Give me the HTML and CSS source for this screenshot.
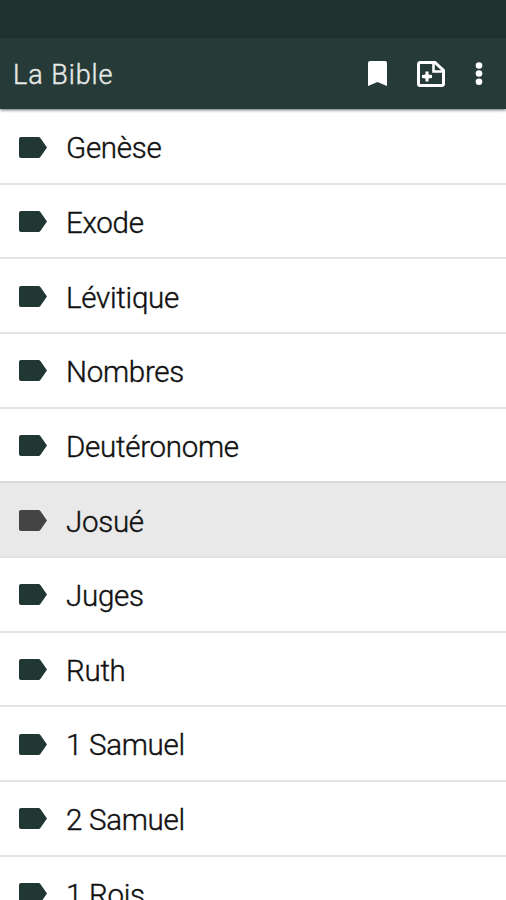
FILE: index.html
```html
<!DOCTYPE html>
<html lang="fr">
<head>
<meta charset="utf-8">
<title>La Bible</title>
<link rel="stylesheet" href="styles.css">
</head>
<body>
<svg class="defs" width="0" height="0"><symbol id="label" viewBox="3 5 19 14" preserveAspectRatio="none"><path d="M17.63 5.84C17.27 5.33 16.67 5 16 5L4.500 5C3.500 5 3 5.600 3 6.500v11c0 .9.500 1.500 1.500 1.500L16 19c.67 0 1.27-.33 1.63-.84L22 12l-4.37-6.16z"/></symbol></svg>
<div class="status"></div>
<header class="bar">
<h1>La Bible</h1>
<svg class="bookmark" viewBox="0 0 19 25"><path d="M2 0h15a2 2 0 0 1 2 2v23l-9.500-4L0 25V2a2 2 0 0 1 2-2z"/></svg>
<svg class="note" viewBox="0 0 28 26"><path class="outline" d="M3 1.500h15L26.500 9.500v13.500a1.500 1.500 0 0 1-1.500 1.500H3A1.500 1.500 0 0 1 1.500 23V3A1.500 1.500 0 0 1 3 1.500z"/><path class="fold" d="M16.500 2v8.500h9.500"/><path d="M8.500 10.500h3v3l3.500.5v3l-3.500.5v3h-3v-3L5 17v-3l3.500-.5z"/></svg>
<svg class="more" viewBox="0 0 8 24"><circle cx="4" cy="3.500" r="3.300"/><circle cx="4" cy="11.500" r="3.300"/><circle cx="4" cy="19.800" r="3.300"/></svg>
</header>
<ul class="books">
<li><svg><use href="#label"/></svg><span>Genèse</span></li>
<li><svg><use href="#label"/></svg><span>Exode</span></li>
<li><svg><use href="#label"/></svg><span>Lévitique</span></li>
<li><svg><use href="#label"/></svg><span>Nombres</span></li>
<li><svg><use href="#label"/></svg><span>Deutéronome</span></li>
<li class="active"><svg><use href="#label"/></svg><span>Josué</span></li>
<li><svg><use href="#label"/></svg><span>Juges</span></li>
<li><svg><use href="#label"/></svg><span>Ruth</span></li>
<li><svg><use href="#label"/></svg><span>1 Samuel</span></li>
<li><svg><use href="#label"/></svg><span>2 Samuel</span></li>
<li><svg><use href="#label"/></svg><span>1 Rois</span></li>
</ul>
</body>
</html>
```
FILE: styles.css
```css
* { box-sizing: border-box; }
body { margin: 0; height: 900px; overflow: hidden; display: flex; flex-direction: column; background: #fff; font-family: Roboto, "Liberation Sans", sans-serif; }
.defs { position: absolute; }
.status { height: 38px; flex: none; background: #1f322f; }
.bar { height: 71px; flex: none; display: flex; align-items: center; padding: 0 23px 0 13px; background: #263a37; color: #e6e9e8; box-shadow: 0 1px 3px rgba(0,0,0,.6); z-index: 1; }
h1 { margin: 2px auto 0 0; font-size: 27px; font-weight: 300; line-height: 32px; letter-spacing: .95px; -webkit-text-stroke: .4px; }
.bar svg { fill: #fff; }
.bookmark { width: 19px; height: 25px; margin-right: 30px; }
.note { width: 28px; height: 26px; margin: 1px 30px 0 0; }
.note .outline { fill: none; stroke: #fff; stroke-width: 3; }
.note .fold { fill: none; stroke: #fff; stroke-width: 2.6; }
.more { width: 8px; height: 24px; }
.books { list-style: none; margin: 0; padding: 1.2px 0 0; flex: none; }
li { height: 74.65px; display: flex; align-items: center; padding: 1px 0 0 19px; border-bottom: 2px solid #e4e4e4; }
li svg { width: 28px; height: 21px; fill: #213734; margin-right: 19px; }
li span { margin-top: 2.6px; font-size: 29.5px; line-height: 36px; font-weight: 300; color: #111; letter-spacing: -.28px; -webkit-text-stroke: .4px; }
.active { background: #e9e9e9; box-shadow: 0 -2px #d8d8d8; }
.active svg { fill: #444; }
```
